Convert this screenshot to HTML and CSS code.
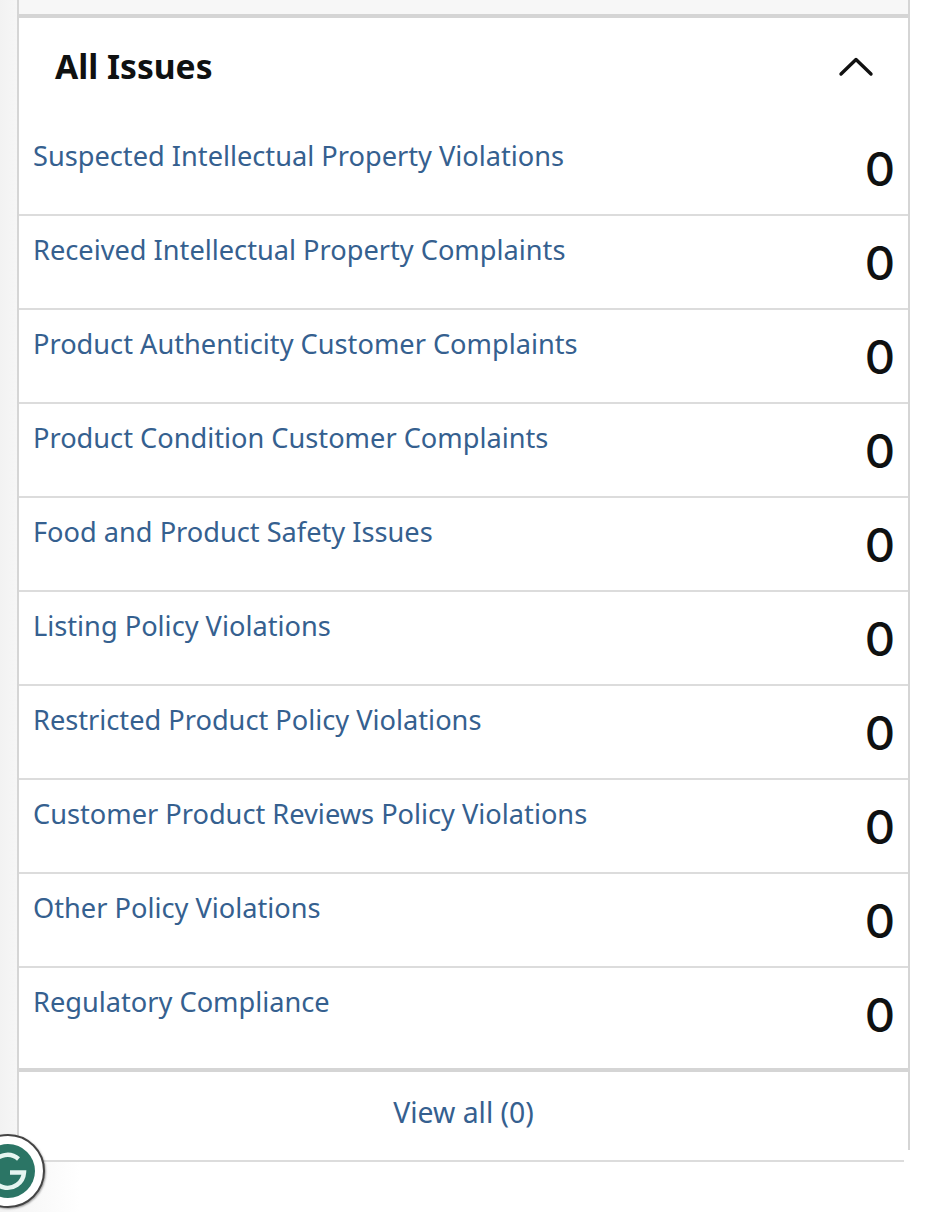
FILE: index.html
```html
<!DOCTYPE html>
<html lang="en">
<head>
<meta charset="utf-8">
<title>All Issues</title>
<link rel="stylesheet" href="styles.css">
</head>
<body>
<main class="page">
  <div class="top-strip"></div>
  <section class="card">
    <header class="card-head">
      <h2 class="title">All Issues</h2>
      <svg class="chevron" width="36" height="22" viewBox="0 0 36 22" aria-hidden="true"><path d="M3 19 L18 4.5 L33 19" fill="none" stroke="#111" stroke-width="3.4" stroke-linecap="round" stroke-linejoin="round"/></svg>
    </header>
    <ul class="rows">
      <li class="row"><a class="link">Suspected Intellectual Property Violations</a><span class="count">0</span></li>
      <li class="row"><a class="link">Received Intellectual Property Complaints</a><span class="count">0</span></li>
      <li class="row"><a class="link">Product Authenticity Customer Complaints</a><span class="count">0</span></li>
      <li class="row"><a class="link">Product Condition Customer Complaints</a><span class="count">0</span></li>
      <li class="row"><a class="link">Food and Product Safety Issues</a><span class="count">0</span></li>
      <li class="row"><a class="link">Listing Policy Violations</a><span class="count">0</span></li>
      <li class="row"><a class="link">Restricted Product Policy Violations</a><span class="count">0</span></li>
      <li class="row"><a class="link">Customer Product Reviews Policy Violations</a><span class="count">0</span></li>
      <li class="row"><a class="link">Other Policy Violations</a><span class="count">0</span></li>
      <li class="row row-last"><a class="link">Regulatory Compliance</a><span class="count">0</span></li>
    </ul>
    <footer class="card-foot"><a class="link view-all">View all (0)</a></footer>
  </section>
</main>
<div class="badge">
  <svg class="badge-g" width="54" height="54" viewBox="0 0 54 54" aria-hidden="true">
    <circle cx="27" cy="27" r="27" fill="#2b7565"/>
    <path d="M37.5 15 A16.5 16.5 0 1 0 43 28.5 H29" fill="none" stroke="#e6f5f1" stroke-width="4.4"/>
  </svg>
</div>
</body>
</html>
```
FILE: styles.css
```css
html, body {
  margin: 0;
  padding: 0;
  background: #fff;
}
body {
  width: 940px;
  height: 1212px;
  overflow: hidden;
  position: relative;
  font-family: "Noto Sans", "Open Sans", sans-serif;
  background: linear-gradient(90deg, #f2f2f2 0, #f6f6f6 17px, #fcfcfc 60px, #fff 80px);
}
.page {
  margin-left: 17px;
  width: 893px;
}
.top-strip {
  height: 14px;
  background: #f7f7f7;
  border-left: 2px solid #d5d5d5;
  border-right: 2px solid #d5d5d5;
  box-sizing: border-box;
}
.card {
  box-sizing: border-box;
  position: relative;
  height: 1148px;
  background: #fff;
  border-top: 4px solid #d5d5d5;
  border-bottom: 2px solid #dcdcdc;
  border-left: 2px solid #d5d5d5;
  border-right: 2px solid #d5d5d5;
  display: flex;
  flex-direction: column;
}
.card::after {
  content: "";
  position: absolute;
  right: -2px;
  bottom: -2px;
  width: 6px;
  height: 12px;
  background: #fff;
}
.card-head {
  height: 104px;
  box-sizing: border-box;
  padding: 0 34px 9px 36px;
  display: flex;
  align-items: center;
  justify-content: space-between;
}
.title {
  margin: 0;
  font-size: 33.6px;
  font-weight: 700;
  color: #0f1111;
}
.rows {
  list-style: none;
  margin: 0;
  padding: 0;
}
.row {
  box-sizing: border-box;
  height: 94px;
  padding: 16px 13px 0 14px;
  border-bottom: 2px solid #dcdcdc;
  display: flex;
  justify-content: space-between;
  align-items: flex-start;
}
.row-last {
  height: 104px;
  border-bottom: 4px solid #d5d5d5;
}
.link {
  font-size: 27.2px;
  line-height: 36px;
  color: #35608f;
}
.count {
  font-family: Inter, "Noto Sans", sans-serif;
  font-size: 47px;
  font-weight: 500;
  line-height: 66px;
  color: #0f1111;
  margin-top: -2px;
}
.card-foot {
  flex: 1;
  display: flex;
  align-items: center;
  justify-content: center;
  padding-bottom: 8px;
}
.view-all {
  font-size: 28.4px;
}
.badge {
  position: absolute;
  left: -29px;
  top: 1134px;
  width: 74px;
  height: 74px;
  box-sizing: border-box;
  border-radius: 50%;
  background: #fff;
  border: 2px solid #444;
  box-shadow: 1px 1px 2px rgba(0, 0, 0, 0.35);
  display: flex;
  align-items: center;
  justify-content: center;
}
.badge-g {
  display: block;
}
```
